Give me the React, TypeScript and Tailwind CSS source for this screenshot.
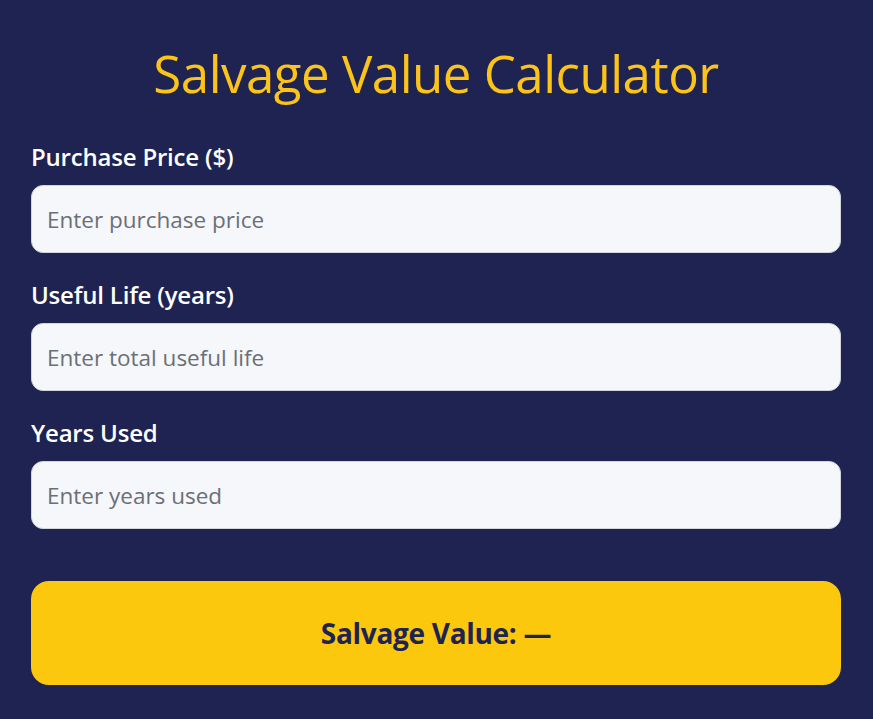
import React from "react";

const fields = [
  { id: "price", label: "Purchase Price ($)", placeholder: "Enter purchase price" },
  { id: "life", label: "Useful Life (years)", placeholder: "Enter total useful life" },
  { id: "used", label: "Years Used", placeholder: "Enter years used" },
];

const App = () => {
  return (
    <div className="min-h-[719px] w-full bg-[#1e2352] pl-[31px] pr-[32px] pt-[38px] font-['Open_Sans',sans-serif]">
      <h1 className="text-center text-[51px] leading-[70px] font-normal text-[#fcc419] tracking-[-0.5px]">
        Salvage Value Calculator
      </h1>

      <div className="mt-[30px] flex flex-col gap-[23px]">
        {fields.map((f) => (
          <div key={f.id} className="flex flex-col">
            <label className="h-[38px] text-[24px] leading-[38px] font-semibold text-white tracking-[-0.2px]">
              {f.label}
            </label>
            <input
              type="text"
              placeholder={f.placeholder}
              className="mt-[9px] h-[68px] w-full rounded-[12px] border border-[#d1d5db] bg-[#f5f7fa] px-[15px] text-[22.5px] text-[#1f2937] outline-none placeholder:text-[#6b6f76]"
            />
          </div>
        ))}
      </div>

      <div className="mt-[52px] flex h-[104px] items-center justify-center rounded-[18px] bg-[#fcc80d]">
        <span className="text-[28px] font-bold text-[#1e2352] tracking-[-0.3px]">
          Salvage Value: —
        </span>
      </div>
    </div>
  );
};

export default App;
